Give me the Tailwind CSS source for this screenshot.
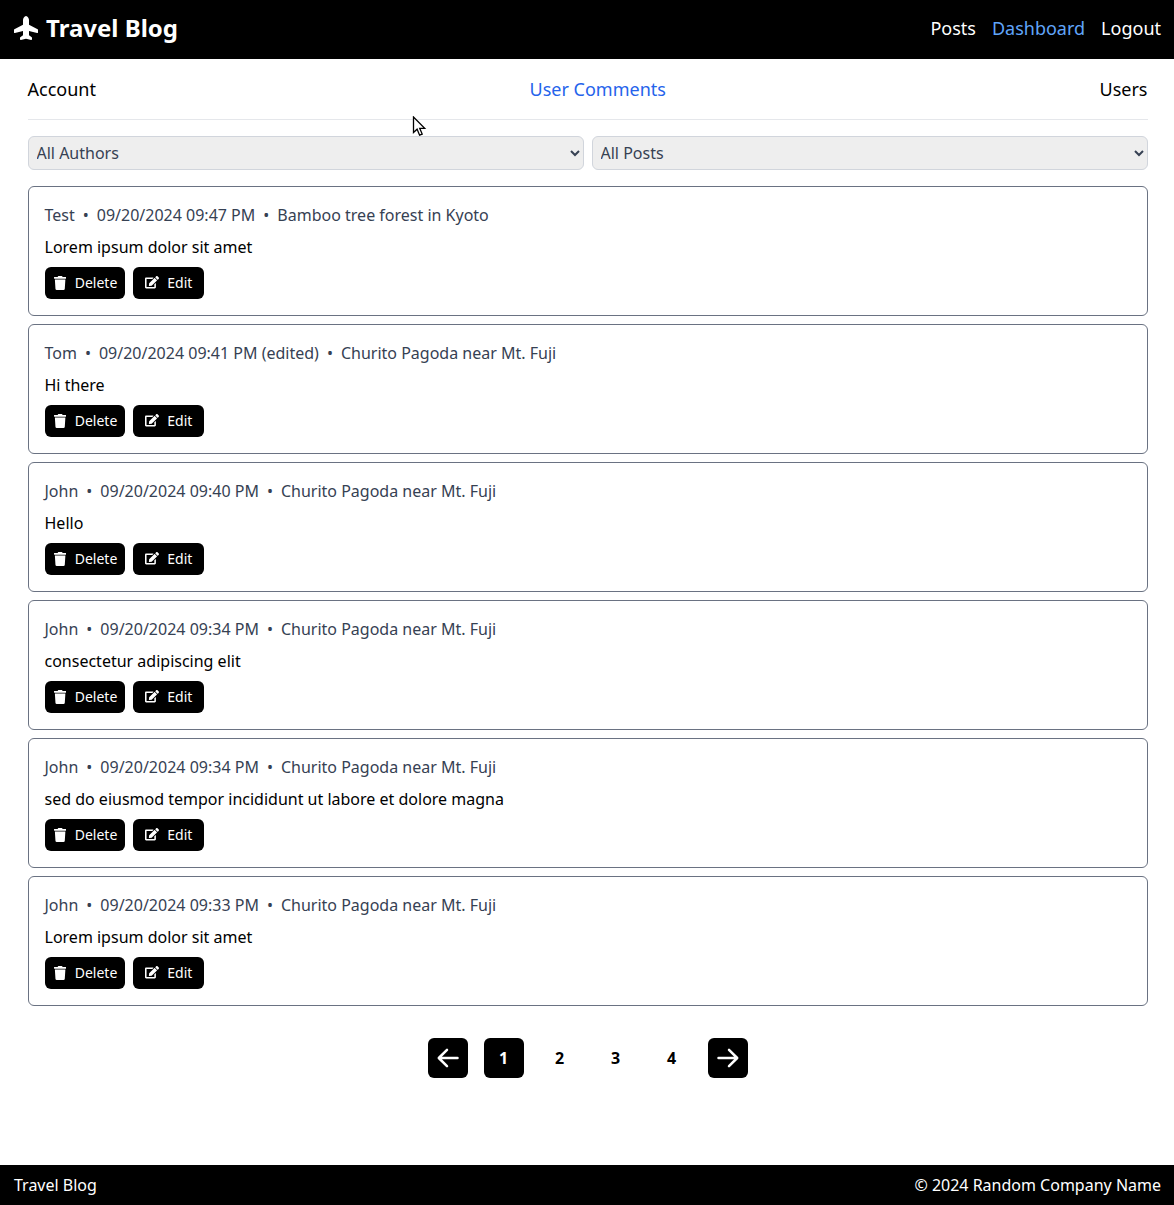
<!DOCTYPE html>
<html lang="en" class="overflow-x-hidden">
<head>
    <meta charset="UTF-8">
    <meta name="viewport" content="width=device-width, initial-scale=1.0">
    <title>Travel Blog</title>
    <script src="https://cdn.jsdelivr.net/npm/@tailwindcss/browser@4"></script>
</head>
<body class="relative w-[1175px] min-h-screen flex flex-col bg-white text-black font-['Noto_Sans',sans-serif]">

<!-- Header -->
<header class="h-[59px] pb-[3px] bg-black text-white flex items-center justify-between px-[14px]">
    <a class="flex items-center gap-2 text-2xl font-bold" href="#">
        <svg class="w-6 h-6" viewBox="0 0 512 576" preserveAspectRatio="none" fill="currentColor"><path transform="translate(0 576) rotate(-90)" d="M480 192H365.710L260.610 8.060A16.014 16.014 0 0 0 246.710 0h-65.500c-10.630 0-18.300 10.170-15.380 20.390L214.860 192H112l-43.200-57.600c-3.020-4.030-7.770-6.400-12.800-6.400H16.010C5.600 128-2.040 137.780.49 147.880L32 256 .49 364.120C-2.040 374.220 5.600 384 16.010 384H56c5.040 0 9.780-2.370 12.800-6.400L112 320h102.860l-49.030 171.600c-2.920 10.220 4.750 20.400 15.380 20.400h65.500c5.740 0 11.040-3.080 13.890-8.060L365.710 320H480c35.350 0 96-28.650 96-64s-60.650-64-96-64z"/></svg>
        Travel Blog
    </a>
    <nav class="flex gap-4 text-lg">
        <a href="#">Posts</a>
        <a href="#" class="text-[#60a5fa]">Dashboard</a>
        <a href="#">Logout</a>
    </nav>
</header>

<main class="flex-1 w-[1120px] mx-auto">
    <!-- Tabs -->
    <div class="h-[61px] flex items-center justify-between border-b border-gray-200 text-lg">
        <a href="#">Account</a>
        <a href="#" class="text-[#2563eb]">User Comments</a>
        <a href="#">Users</a>
    </div>

    <!-- Filters -->
    <div class="grid grid-cols-2 gap-2 mt-4">
        <select class="h-[34px] px-1 bg-[#eeeeee] border border-gray-300 rounded-md text-gray-700"><option>All Authors</option></select>
        <select class="h-[34px] px-1 bg-[#eeeeee] border border-gray-300 rounded-md text-gray-700"><option>All Posts</option></select>
    </div>

    <!-- Comments -->
    <div class="flex flex-col gap-2 mt-4">
        <article class="border border-gray-500 rounded-md p-4">
            <p class="text-gray-700 mb-2">Test<span class="mx-2">•</span>09/20/2024 09:47 PM<span class="mx-2">•</span>Bamboo tree forest in Kyoto</p>
            <p class="mb-2">Lorem ipsum dolor sit amet</p>
            <div class="flex gap-2 text-sm">
                <button class="h-8 pl-[9px] pr-2 flex items-center gap-[9px] bg-black text-white rounded-md"><svg class="w-[12.25px] h-[14px]" viewBox="0 0 448 512" fill="currentColor"><path d="M432 32H312l-9.400-18.700A24 24 0 0 0 281.100 0H166.800a23.720 23.720 0 0 0-21.400 13.300L136 32H16A16 16 0 0 0 0 48v32a16 16 0 0 0 16 16h416a16 16 0 0 0 16-16V48a16 16 0 0 0-16-16zM53.200 467a48 48 0 0 0 47.900 45h245.800a48 48 0 0 0 47.900-45L416 128H32z"/></svg>Delete</button>
                <button class="h-8 px-3 flex items-center gap-2 bg-black text-white rounded-md"><svg class="w-[14px] h-[14px]" viewBox="0 0 576 576" fill="currentColor"><path d="M402.600 83.200l90.200 90.200c3.800 3.800 3.800 10 0 13.800L274.400 405.600l-92.800 10.300c-12.400 1.400-22.900-9.100-21.500-21.500l10.300-92.800L388.800 83.200c3.800-3.800 10-3.800 13.800 0zm162-22.900l-48.800-48.800c-15.200-15.200-39.900-15.200-55.200 0l-35.400 35.400c-3.800 3.800-3.800 10 0 13.800l90.200 90.200c3.800 3.800 10 3.800 13.800 0l35.400-35.400c15.200-15.300 15.200-40 0-55.200zM384 346.200V448H64V128h229.800c3.200 0 6.200-1.300 8.500-3.500l40-40c7.600-7.600 2.200-20.500-8.500-20.500H48C21.500 64 0 85.500 0 112v352c0 26.500 21.500 48 48 48h352c26.500 0 48-21.500 48-48V306.200c0-10.700-12.900-16-20.500-8.500l-40 40c-2.200 2.300-3.500 5.300-3.500 8.500z"/></svg>Edit</button>
            </div>
        </article>
        <article class="border border-gray-500 rounded-md p-4">
            <p class="text-gray-700 mb-2">Tom<span class="mx-2">•</span>09/20/2024 09:41 PM (edited)<span class="mx-2">•</span>Churito Pagoda near Mt. Fuji</p>
            <p class="mb-2">Hi there</p>
            <div class="flex gap-2 text-sm">
                <button class="h-8 pl-[9px] pr-2 flex items-center gap-[9px] bg-black text-white rounded-md"><svg class="w-[12.25px] h-[14px]" viewBox="0 0 448 512" fill="currentColor"><path d="M432 32H312l-9.400-18.700A24 24 0 0 0 281.100 0H166.800a23.720 23.720 0 0 0-21.400 13.300L136 32H16A16 16 0 0 0 0 48v32a16 16 0 0 0 16 16h416a16 16 0 0 0 16-16V48a16 16 0 0 0-16-16zM53.200 467a48 48 0 0 0 47.900 45h245.800a48 48 0 0 0 47.900-45L416 128H32z"/></svg>Delete</button>
                <button class="h-8 px-3 flex items-center gap-2 bg-black text-white rounded-md"><svg class="w-[14px] h-[14px]" viewBox="0 0 576 576" fill="currentColor"><path d="M402.600 83.200l90.200 90.200c3.800 3.800 3.800 10 0 13.800L274.400 405.600l-92.800 10.300c-12.400 1.400-22.900-9.100-21.500-21.500l10.300-92.800L388.800 83.200c3.800-3.800 10-3.800 13.800 0zm162-22.900l-48.800-48.800c-15.200-15.200-39.900-15.200-55.200 0l-35.400 35.400c-3.800 3.800-3.800 10 0 13.800l90.200 90.200c3.800 3.800 10 3.800 13.800 0l35.400-35.400c15.200-15.300 15.200-40 0-55.200zM384 346.200V448H64V128h229.800c3.200 0 6.200-1.300 8.500-3.500l40-40c7.600-7.600 2.200-20.500-8.500-20.500H48C21.500 64 0 85.500 0 112v352c0 26.500 21.500 48 48 48h352c26.500 0 48-21.500 48-48V306.200c0-10.700-12.900-16-20.500-8.500l-40 40c-2.200 2.300-3.500 5.300-3.500 8.500z"/></svg>Edit</button>
            </div>
        </article>
        <article class="border border-gray-500 rounded-md p-4">
            <p class="text-gray-700 mb-2">John<span class="mx-2">•</span>09/20/2024 09:40 PM<span class="mx-2">•</span>Churito Pagoda near Mt. Fuji</p>
            <p class="mb-2">Hello</p>
            <div class="flex gap-2 text-sm">
                <button class="h-8 pl-[9px] pr-2 flex items-center gap-[9px] bg-black text-white rounded-md"><svg class="w-[12.25px] h-[14px]" viewBox="0 0 448 512" fill="currentColor"><path d="M432 32H312l-9.400-18.700A24 24 0 0 0 281.100 0H166.800a23.720 23.720 0 0 0-21.400 13.300L136 32H16A16 16 0 0 0 0 48v32a16 16 0 0 0 16 16h416a16 16 0 0 0 16-16V48a16 16 0 0 0-16-16zM53.200 467a48 48 0 0 0 47.900 45h245.800a48 48 0 0 0 47.900-45L416 128H32z"/></svg>Delete</button>
                <button class="h-8 px-3 flex items-center gap-2 bg-black text-white rounded-md"><svg class="w-[14px] h-[14px]" viewBox="0 0 576 576" fill="currentColor"><path d="M402.600 83.200l90.200 90.200c3.800 3.800 3.800 10 0 13.800L274.400 405.600l-92.800 10.300c-12.400 1.400-22.900-9.100-21.500-21.500l10.300-92.800L388.800 83.200c3.800-3.800 10-3.800 13.800 0zm162-22.900l-48.800-48.800c-15.200-15.200-39.900-15.200-55.200 0l-35.400 35.400c-3.800 3.800-3.800 10 0 13.800l90.200 90.200c3.800 3.800 10 3.800 13.800 0l35.400-35.400c15.200-15.300 15.200-40 0-55.200zM384 346.200V448H64V128h229.800c3.200 0 6.200-1.300 8.500-3.500l40-40c7.600-7.600 2.200-20.500-8.500-20.500H48C21.500 64 0 85.500 0 112v352c0 26.500 21.500 48 48 48h352c26.500 0 48-21.500 48-48V306.200c0-10.700-12.900-16-20.500-8.500l-40 40c-2.200 2.300-3.500 5.300-3.500 8.500z"/></svg>Edit</button>
            </div>
        </article>
        <article class="border border-gray-500 rounded-md p-4">
            <p class="text-gray-700 mb-2">John<span class="mx-2">•</span>09/20/2024 09:34 PM<span class="mx-2">•</span>Churito Pagoda near Mt. Fuji</p>
            <p class="mb-2">consectetur adipiscing elit</p>
            <div class="flex gap-2 text-sm">
                <button class="h-8 pl-[9px] pr-2 flex items-center gap-[9px] bg-black text-white rounded-md"><svg class="w-[12.25px] h-[14px]" viewBox="0 0 448 512" fill="currentColor"><path d="M432 32H312l-9.400-18.700A24 24 0 0 0 281.100 0H166.800a23.720 23.720 0 0 0-21.400 13.300L136 32H16A16 16 0 0 0 0 48v32a16 16 0 0 0 16 16h416a16 16 0 0 0 16-16V48a16 16 0 0 0-16-16zM53.200 467a48 48 0 0 0 47.900 45h245.800a48 48 0 0 0 47.900-45L416 128H32z"/></svg>Delete</button>
                <button class="h-8 px-3 flex items-center gap-2 bg-black text-white rounded-md"><svg class="w-[14px] h-[14px]" viewBox="0 0 576 576" fill="currentColor"><path d="M402.600 83.200l90.200 90.200c3.800 3.800 3.800 10 0 13.800L274.400 405.600l-92.800 10.300c-12.400 1.400-22.900-9.100-21.500-21.500l10.300-92.800L388.800 83.200c3.800-3.800 10-3.800 13.800 0zm162-22.900l-48.800-48.800c-15.200-15.200-39.900-15.200-55.200 0l-35.400 35.400c-3.800 3.800-3.800 10 0 13.800l90.200 90.200c3.800 3.800 10 3.800 13.800 0l35.400-35.400c15.200-15.300 15.200-40 0-55.200zM384 346.200V448H64V128h229.800c3.200 0 6.200-1.300 8.500-3.500l40-40c7.600-7.600 2.200-20.500-8.500-20.500H48C21.500 64 0 85.500 0 112v352c0 26.500 21.500 48 48 48h352c26.500 0 48-21.500 48-48V306.200c0-10.700-12.900-16-20.500-8.500l-40 40c-2.200 2.300-3.500 5.300-3.500 8.500z"/></svg>Edit</button>
            </div>
        </article>
        <article class="border border-gray-500 rounded-md p-4">
            <p class="text-gray-700 mb-2">John<span class="mx-2">•</span>09/20/2024 09:34 PM<span class="mx-2">•</span>Churito Pagoda near Mt. Fuji</p>
            <p class="mb-2">sed do eiusmod tempor incididunt ut labore et dolore magna</p>
            <div class="flex gap-2 text-sm">
                <button class="h-8 pl-[9px] pr-2 flex items-center gap-[9px] bg-black text-white rounded-md"><svg class="w-[12.25px] h-[14px]" viewBox="0 0 448 512" fill="currentColor"><path d="M432 32H312l-9.400-18.700A24 24 0 0 0 281.100 0H166.800a23.720 23.720 0 0 0-21.400 13.300L136 32H16A16 16 0 0 0 0 48v32a16 16 0 0 0 16 16h416a16 16 0 0 0 16-16V48a16 16 0 0 0-16-16zM53.200 467a48 48 0 0 0 47.900 45h245.800a48 48 0 0 0 47.900-45L416 128H32z"/></svg>Delete</button>
                <button class="h-8 px-3 flex items-center gap-2 bg-black text-white rounded-md"><svg class="w-[14px] h-[14px]" viewBox="0 0 576 576" fill="currentColor"><path d="M402.600 83.200l90.200 90.200c3.800 3.800 3.800 10 0 13.800L274.400 405.600l-92.800 10.300c-12.400 1.400-22.900-9.100-21.500-21.500l10.300-92.800L388.800 83.200c3.800-3.800 10-3.800 13.800 0zm162-22.900l-48.800-48.800c-15.200-15.200-39.900-15.200-55.200 0l-35.400 35.400c-3.800 3.800-3.800 10 0 13.800l90.200 90.200c3.800 3.800 10 3.800 13.800 0l35.400-35.400c15.200-15.300 15.200-40 0-55.200zM384 346.200V448H64V128h229.800c3.200 0 6.200-1.300 8.500-3.500l40-40c7.600-7.600 2.200-20.500-8.500-20.500H48C21.500 64 0 85.500 0 112v352c0 26.500 21.500 48 48 48h352c26.500 0 48-21.500 48-48V306.200c0-10.700-12.900-16-20.500-8.500l-40 40c-2.200 2.300-3.500 5.300-3.500 8.500z"/></svg>Edit</button>
            </div>
        </article>
        <article class="border border-gray-500 rounded-md p-4">
            <p class="text-gray-700 mb-2">John<span class="mx-2">•</span>09/20/2024 09:33 PM<span class="mx-2">•</span>Churito Pagoda near Mt. Fuji</p>
            <p class="mb-2">Lorem ipsum dolor sit amet</p>
            <div class="flex gap-2 text-sm">
                <button class="h-8 pl-[9px] pr-2 flex items-center gap-[9px] bg-black text-white rounded-md"><svg class="w-[12.25px] h-[14px]" viewBox="0 0 448 512" fill="currentColor"><path d="M432 32H312l-9.400-18.700A24 24 0 0 0 281.100 0H166.800a23.720 23.720 0 0 0-21.400 13.300L136 32H16A16 16 0 0 0 0 48v32a16 16 0 0 0 16 16h416a16 16 0 0 0 16-16V48a16 16 0 0 0-16-16zM53.200 467a48 48 0 0 0 47.900 45h245.800a48 48 0 0 0 47.900-45L416 128H32z"/></svg>Delete</button>
                <button class="h-8 px-3 flex items-center gap-2 bg-black text-white rounded-md"><svg class="w-[14px] h-[14px]" viewBox="0 0 576 576" fill="currentColor"><path d="M402.600 83.200l90.200 90.200c3.800 3.800 3.800 10 0 13.800L274.400 405.600l-92.800 10.300c-12.400 1.400-22.900-9.100-21.500-21.500l10.300-92.800L388.800 83.200c3.800-3.800 10-3.800 13.800 0zm162-22.900l-48.800-48.800c-15.200-15.200-39.900-15.200-55.200 0l-35.400 35.400c-3.800 3.800-3.800 10 0 13.800l90.200 90.200c3.800 3.800 10 3.800 13.800 0l35.400-35.400c15.200-15.300 15.200-40 0-55.200zM384 346.200V448H64V128h229.800c3.200 0 6.200-1.300 8.500-3.500l40-40c7.600-7.600 2.200-20.500-8.500-20.500H48C21.500 64 0 85.500 0 112v352c0 26.500 21.500 48 48 48h352c26.500 0 48-21.500 48-48V306.200c0-10.700-12.900-16-20.500-8.500l-40 40c-2.200 2.300-3.500 5.300-3.500 8.500z"/></svg>Edit</button>
            </div>
        </article>
    </div>

    <!-- Pagination -->
    <div class="flex justify-center gap-4 mt-8 font-bold">
        <a class="w-10 h-10 flex items-center justify-center bg-black text-white rounded-md" href="#"><svg class="w-6 h-6" viewBox="0 0 24 24" fill="none" stroke="currentColor" stroke-width="2.500" stroke-linecap="round" stroke-linejoin="round"><path d="M21.500 12H3.500M11 3.800 2.800 12l8.200 8.200"/></svg></a>
        <a class="w-10 h-10 flex items-center justify-center bg-black text-white rounded-md" href="#">1</a>
        <a class="w-10 h-10 flex items-center justify-center" href="#">2</a>
        <a class="w-10 h-10 flex items-center justify-center" href="#">3</a>
        <a class="w-10 h-10 flex items-center justify-center" href="#">4</a>
        <a class="w-10 h-10 flex items-center justify-center bg-black text-white rounded-md" href="#"><svg class="w-6 h-6" viewBox="0 0 24 24" fill="none" stroke="currentColor" stroke-width="2.500" stroke-linecap="round" stroke-linejoin="round"><path d="M2.500 12h18M13 3.800l8.200 8.200-8.200 8.200"/></svg></a>
    </div>
</main>

<!-- Footer -->
<footer class="h-10 bg-black text-white flex items-center justify-between px-[14px]">
    <span>Travel Blog</span>
    <span>© 2024 Random Company Name</span>
</footer>

<!-- Mouse pointer caught in the screenshot -->
<svg class="absolute left-[412px] top-[116px] w-[15px] h-[21px]" viewBox="0 0 15 21"><path d="M1.500 1v15.500l3.600-3.300 2.500 6 2.600-1.100-2.500-5.800h5z" fill="#fff" stroke="#000" stroke-width="1.300"/></svg>

</body>
</html>
